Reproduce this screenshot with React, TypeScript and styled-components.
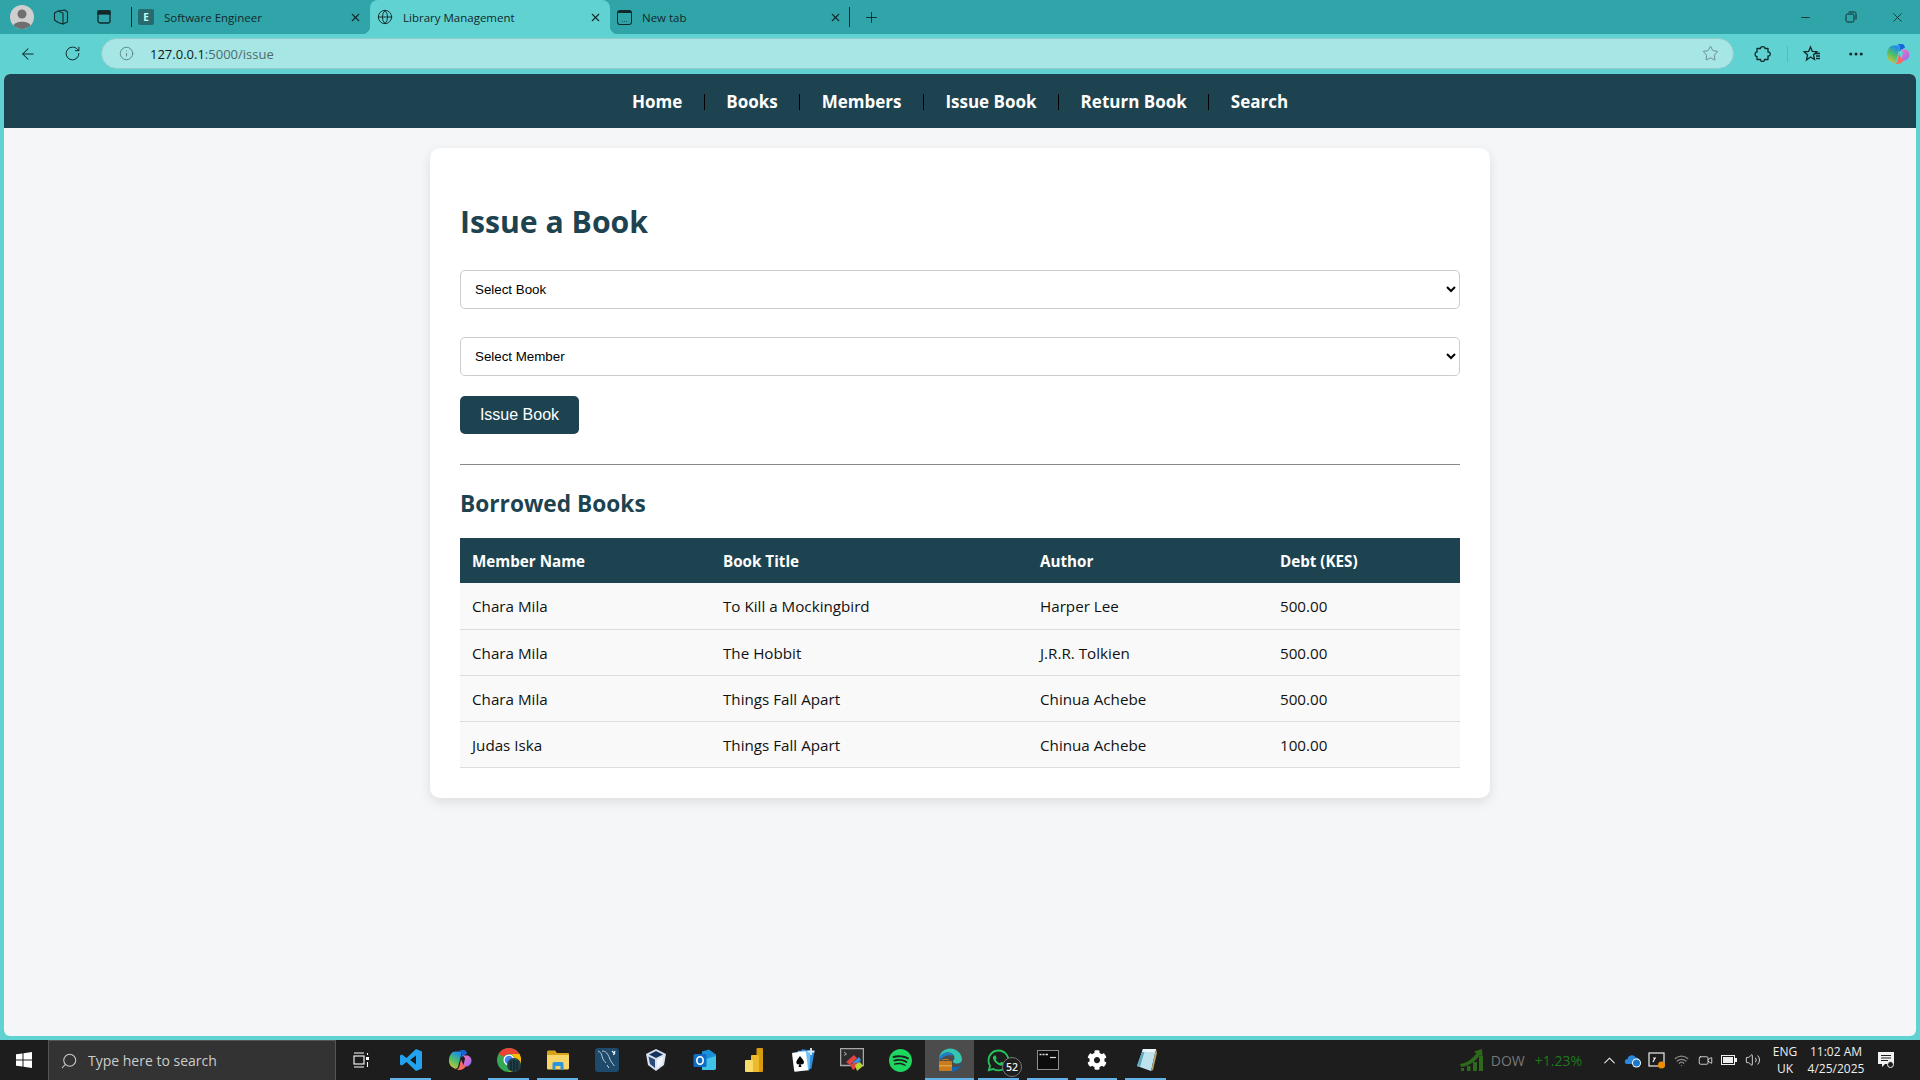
import { Fragment } from "react";
import styled, { createGlobalStyle, css } from "styled-components";
import { ArrowLeft, RotateCw, Info, Star, MoreHorizontal, Minus, X, Plus, Globe, Search as SearchIcon, ChevronUp, Wifi, Video, Volume2 } from "lucide-react";
import { SiSpotify } from "react-icons/si";
import { FaWhatsapp, FaCog } from "react-icons/fa";

const GlobalStyle = createGlobalStyle`
  html, body {
    margin: 0;
    padding: 0;
    height: 100%;
    overflow: hidden;
  }
  * {
    box-sizing: border-box;
  }
`;

const Screen = styled.div`
  display: flex;
  flex-direction: column;
  width: 1920px;
  height: 1080px;
  background: #60d2d2;
  font-family: "Open Sans", "Liberation Sans", sans-serif;
`;

const TabStrip = styled.div`
  display: flex;
  align-items: stretch;
  height: 34px;
  background: #30a5a9;
  color: #10292b;
`;

const StripSlot = styled.div<{ $w: number }>`
  display: flex;
  align-items: center;
  justify-content: center;
  width: ${(p) => p.$w}px;
`;

const activeTab = css`
  background: #60d2d2;
  border-radius: 8px 8px 0 0;
  &::before,
  &::after {
    content: "";
    position: absolute;
    bottom: 0;
    width: 8px;
    height: 8px;
  }
  &::before {
    left: -8px;
    background: radial-gradient(circle at 0 0, transparent 8px, #60d2d2 8.5px);
  }
  &::after {
    right: -8px;
    background: radial-gradient(circle at 100% 0, transparent 8px, #60d2d2 8.5px);
  }
`;

const dividerTab = css`
  &::before {
    content: "";
    position: absolute;
    left: 1px;
    top: 7px;
    bottom: 7px;
    width: 1px;
    background: #12282a;
  }
`;

const Tab = styled.div<{ $active?: boolean; $divider?: boolean; $pad: number }>`
  position: relative;
  display: flex;
  align-items: center;
  width: 240px;
  padding: 0 8px 0 ${(p) => p.$pad}px;
  font-size: 11.5px;
  color: #12282a;
  ${(p) => p.$active && activeTab}
  ${(p) => p.$divider && dividerTab}
`;

const TabTitle = styled.span`
  flex: 1;
  margin-left: 10px;
  white-space: nowrap;
`;

const Favicon = styled.div`
  display: flex;
  align-items: center;
  justify-content: center;
  width: 16px;
  height: 16px;
  border-radius: 2px;
  background: #276b70;
  color: #cfe;
  font-size: 10px;
  font-weight: 700;
`;

const NewTabIcon = styled.div`
  display: flex;
  align-items: flex-end;
  justify-content: center;
  width: 15px;
  height: 15px;
  border: 1.3px solid #12282a;
  border-top-width: 3px;
  border-radius: 3px;
  font-size: 8px;
  line-height: 7px;
`;

const PlusSlot = styled.div`
  display: flex;
  align-items: center;
  margin-left: 13px;
`;

const TabEnd = styled.div`
  width: 1px;
  height: 20px;
  margin: 7px 0 0 -1px;
  background: #12282a;
`;

const WindowControls = styled.div`
  display: flex;
  align-items: center;
  margin-left: auto;
  color: #10292b;
`;

const WindowButton = styled.div`
  display: flex;
  align-items: center;
  justify-content: center;
  width: 46px;
`;

const Toolbar = styled.div`
  display: flex;
  align-items: center;
  height: 40px;
  padding-bottom: 1px;
  color: #10292b;
`;

const ToolButton = styled.div<{ $w: number; $pl?: number }>`
  display: flex;
  flex-shrink: 0;
  align-items: center;
  justify-content: center;
  width: ${(p) => p.$w}px;
  padding-left: ${(p) => p.$pl ?? 0}px;
`;

const AddressBar = styled.div`
  display: flex;
  flex-shrink: 0;
  align-items: center;
  width: 1633px;
  height: 31px;
  margin-left: 13px;
  padding: 0 14px 0 17px;
  background: #a6e7e6;
  border: 1px solid #92cbcb;
  border-radius: 16px;
  font-size: 13px;
  color: #4f6a6b;
`;

const Host = styled.span`
  margin-left: 16px;
  color: #0b1a1b;
`;

const AddressEnd = styled.div`
  display: flex;
  margin-left: auto;
  color: #6c8283;
`;

const ToolDivider = styled.div`
  flex-shrink: 0;
  width: 1px;
  height: 16px;
  background: #7fa9a9;
`;

const Viewport = styled.div`
  flex: 1;
  margin: 0 4px 4px;
  min-height: 0;
  background: #f4f6f8;
  border-radius: 6px;
  overflow: hidden;
`;

const TopNav = styled.nav`
  display: flex;
  align-items: center;
  justify-content: center;
  height: 54px;
  background: #1e4350;
`;

const NavLink = styled.a`
  padding: 0 21.5px;
  color: #fff;
  font-size: 17px;
  font-weight: 700;
`;

const NavDivider = styled.span`
  width: 1px;
  height: 16px;
  margin-top: 2px;
  background: #000;
`;

const Card = styled.main`
  width: 1060px;
  margin: 20px auto 0;
  padding: 30px;
  background: #fff;
  border-radius: 10px;
  box-shadow: 0 4px 12px rgba(0, 0, 0, 0.1);
`;

const Title = styled.h1`
  margin: 22px 0 26px;
  font-size: 30.2px;
  font-weight: 700;
  line-height: 44px;
  color: #1e4350;
`;

const Picker = styled.select`
  display: block;
  width: 100%;
  height: 39px;
  margin-bottom: 28px;
  padding: 0 10px;
  background: #fff;
  border: 1px solid #ccc;
  border-radius: 5px;
  font-family: "Liberation Sans", Arial, sans-serif;
  font-size: 13.33px;
  color: #000;
  &:last-of-type {
    margin-bottom: 20px;
  }
`;

const IssueButton = styled.button`
  display: block;
  width: 119px;
  height: 38px;
  padding: 0;
  background: #1e4350;
  border: 0;
  border-radius: 5px;
  font-family: "Liberation Sans", Arial, sans-serif;
  font-size: 16px;
  color: #fff;
`;

const Rule = styled.hr`
  height: 1px;
  margin: 30px 0 24px;
  border: 0;
  background: #888;
`;

const SubTitle = styled.h2`
  margin: 0 0 20px;
  font-size: 22.7px;
  font-weight: 700;
  line-height: 29px;
  color: #1e4350;
`;

const BookTable = styled.table`
  width: 100%;
  border-collapse: collapse;
  table-layout: fixed;
  font-size: 15.2px;
`;

const HeadCell = styled.th<{ $w: number }>`
  width: ${(p) => p.$w}px;
  height: 45px;
  padding: 0 12px;
  background: #1e4350;
  color: #fff;
  font-weight: 700;
  text-align: left;
`;

const Cell = styled.td`
  height: 46px;
  padding: 1px 12px 0;
  background: #f9f9f9;
  border-bottom: 1px solid #ddd;
  color: #111;
`;

const Taskbar = styled.footer`
  display: flex;
  align-items: center;
  height: 40px;
  background: #1d1d1d;
  color: #fff;
`;

const StartButton = styled.div`
  display: flex;
  align-items: center;
  justify-content: center;
  width: 48px;
  height: 100%;
`;

const SearchBox = styled.div`
  display: flex;
  align-items: center;
  width: 288px;
  height: 100%;
  padding-left: 11px;
  background: #333;
  border: 1px solid #555;
  border-bottom: 0;
  color: #ccc;
  font-size: 14px;
`;

const SearchLabel = styled.span`
  margin-left: 10px;
`;

const TaskView = styled.div`
  display: flex;
  align-items: center;
  justify-content: center;
  width: 50px;
`;

const AppSlot = styled.div<{ $open?: boolean; $active?: boolean }>`
  position: relative;
  display: flex;
  align-items: center;
  justify-content: center;
  width: 49px;
  height: 40px;
  background: ${(p) => (p.$active ? "#4c4c4c" : "transparent")};
  &::after {
    content: "";
    display: ${(p) => (p.$open ? "block" : "none")};
    position: absolute;
    bottom: 0;
    left: ${(p) => (p.$active ? 0 : 4)}px;
    right: ${(p) => (p.$active ? 0 : 4)}px;
    height: 2px;
    background: #63b3ea;
  }
`;

const Badge = styled.span`
  position: absolute;
  right: 1px;
  bottom: 3px;
  width: 20px;
  height: 20px;
  border: 1px solid #777;
  border-radius: 50%;
  background: #1d1d1d;
  color: #eee;
  font-size: 10.5px;
  font-weight: 600;
  line-height: 18px;
  text-align: center;
`;

const Widget = styled.div`
  display: flex;
  align-items: center;
  margin-left: auto;
  font-size: 14px;
`;

const Dow = styled.span`
  margin-left: 7px;
  color: #777;
`;

const Change = styled.span`
  margin-left: 10px;
  color: #1c7a1c;
`;

const TrayIcons = styled.div`
  display: flex;
  align-items: center;
  margin-left: 15px;
`;

const TrayIcon = styled.div`
  display: flex;
  align-items: center;
  justify-content: center;
  width: 24px;
  color: #eee;
`;

const TrayText = styled.div<{ $w: number; $ml: number }>`
  width: ${(p) => p.$w}px;
  margin-left: ${(p) => p.$ml}px;
  font-size: 12px;
  line-height: 17px;
  text-align: center;
  color: #eee;
`;

const NotifySlot = styled.div`
  display: flex;
  justify-content: center;
  width: 54px;
  padding-right: 14px;
`;

const ICON = 24;

function Avatar() {
  return (
    <svg width="24" height="24" viewBox="0 0 24 24">
      <circle cx="12" cy="12" r="12" fill="#cfcfcf" />
      <circle cx="12" cy="9" r="4.5" fill="#6f6f6f" />
      <path d="M3.5 20.5C5 15.500 19 15.500 20.500 20.500 16 25 8 25 3.500 20.500Z" fill="#6f6f6f" />
    </svg>
  );
}

function Workspaces() {
  return (
    <svg width="16" height="16" viewBox="0 0 16 16" fill="none" stroke="#12282a" strokeWidth="1.1">
      <path d="M5 2 12 1 14.500 3V13L10 15" />
      <path d="M1.500 4 5 2 10 4V15L5 13.500 1.500 11Z" />
    </svg>
  );
}

function VerticalTabs() {
  return (
    <svg width="14" height="14" viewBox="0 0 14 14" fill="none" stroke="#12282a" strokeWidth="1.3">
      <rect x="1" y="1" width="12" height="12" rx="2" />
      <rect x="1" y="1" width="12" height="3" fill="#12282a" />
    </svg>
  );
}

function ExtensionsIcon() {
  return (
    <svg width="18" height="18" viewBox="0 0 18 18" fill="none" stroke="#10292b" strokeWidth="1.3" strokeLinejoin="round">
      <path d="M6.500 3.500C6.500 1 11 1 11 3.500H14V7C17 6.500 17 11.500 14 11V14.500H10.500C11 17 6 17 6.500 14.500H3V11.500C0.500 12 0.500 6.500 3 7V3.500Z" />
    </svg>
  );
}

function FavoritesIcon() {
  return (
    <svg width="18" height="18" viewBox="0 0 18 18" fill="none" stroke="#10292b" strokeWidth="1.3">
      <path d="M7.500 2 9.300 6.300 14 6.700 10.500 9.700 11.500 14.500 7.500 12 3.500 15 4.500 9.800 1 6.800 5.700 6.300Z" />
      <path d="M12 8.500H17M13 11H17M13 13.500H17" />
    </svg>
  );
}

function CopilotLogo({ size, id }: { size: number; id: string }) {
  return (
    <svg width={size} height={size} viewBox="0 0 24 24">
      <defs>
        <linearGradient id={`${id}A`} x1="0" y1="1" x2="0.5" y2="0">
          <stop offset="0" stopColor="#f5c12e" />
          <stop offset="0.55" stopColor="#4fbf67" />
          <stop offset="1" stopColor="#1f8fe8" />
        </linearGradient>
        <linearGradient id={`${id}B`} x1="0.3" y1="0" x2="1" y2="1">
          <stop offset="0" stopColor="#ef6fc8" />
          <stop offset="1" stopColor="#8f6cf0" />
        </linearGradient>
        <linearGradient id={`${id}C`} x1="0" y1="1" x2="1" y2="0">
          <stop offset="0" stopColor="#fb7a3e" />
          <stop offset="1" stopColor="#f0568f" />
        </linearGradient>
      </defs>
      <path d="M7 3.500H14L10 19C9.500 20.500 8 21 6.500 20.500 3 19 0.500 16 1 11.500 1.500 7 4 3.500 7 3.500Z" fill={`url(#${id}A)`} />
      <path d="M11 2H15.500C17.500 2 18.500 3 19 5.500L13 9.500 14 5C14 4 13 2.500 11 2Z" fill="#1565d8" />
      <path d="M14 7.500H19C21.500 7.500 23.500 10 23.500 12.500 23.500 16 21 18.500 18 18.500H15L17 11C17.300 9.500 15.500 8 14 7.500Z" fill={`url(#${id}B)`} />
      <path d="M13 11.500 15.500 17H18.500C16 21.500 13.500 22.500 8.500 22 10.500 21.500 11 19.500 11.500 18Z" fill={`url(#${id}C)`} />
    </svg>
  );
}

function VsCodeLogo() {
  return (
    <svg width={ICON} height={ICON} viewBox="0 0 24 24">
      <path fillRule="evenodd" d="M17 1 7.500 10 3 6.500 1 7.500V16.500L3 17.500 7.500 14 17 23 23 20.500V3.500ZM17 7.500V16.500L11 12Z" fill="#23a3ef" />
    </svg>
  );
}

function ChromeLogo() {
  return (
    <svg width={ICON} height={ICON} viewBox="0 0 24 24">
      <circle cx="12" cy="12" r="12" fill="#34a853" />
      <path d="M12 0A12 12 0 0 1 22.400 6H12A6 6 0 0 0 6.800 9L1.600 6A12 12 0 0 1 12 0Z" fill="#ea4335" />
      <path d="M22.400 6A12 12 0 0 1 12 24L17.200 15A6 6 0 0 0 17.200 9 6 6 0 0 0 12 6Z" fill="#fbbc05" />
      <circle cx="12" cy="12" r="5.500" fill="#fff" />
      <circle cx="12" cy="12" r="4.300" fill="#4285f4" />
      <circle cx="17" cy="17" r="7" fill="#22414a" />
      <path d="M14 13V22M17 12V23M20 13V22" stroke="#0e2026" strokeWidth="1.2" />
    </svg>
  );
}

function FolderLogo() {
  return (
    <svg width={ICON} height={ICON} viewBox="0 0 24 24">
      <path d="M1 4C1 3 1.800 2.500 2.500 2.500H9L11 5H22C22.600 5 23 5.500 23 6V8H1Z" fill="#d9a21c" />
      <path d="M1 7H22.500C23 7 23 7.500 23 8V20C23 21 22 21.500 21.500 21.500H2.500C1.500 21.500 1 21 1 20Z" fill="#f7d568" />
      <path d="M6.500 21.500V16C6.500 15 7 14 8 14H16C17 14 17.500 15 17.500 16V21.500H14.500V18H9.500V21.500Z" fill="#2d95db" />
    </svg>
  );
}

function MysqlLogo() {
  return (
    <svg width={ICON} height={ICON} viewBox="0 0 24 24">
      <rect width="24" height="24" rx="3" fill="#1e4a6b" />
      <path d="M3 3C5 4 6.500 5 7 8 7.500 11 9 13 11 15M7 3C11 3 13 6 14.500 10 15.500 13 17 15 19.500 18" fill="none" stroke="#c9d6df" strokeWidth="0.9" />
      <path d="M17 3 20 6M20 3 18.500 7" fill="none" stroke="#e6edf2" strokeWidth="1.300" />
      <path d="M12 17 14 20" fill="none" stroke="#c9d6df" strokeWidth="1" />
    </svg>
  );
}

function VirtualBoxLogo() {
  return (
    <svg width={ICON} height={ICON} viewBox="0 0 24 24">
      <path d="M12 1 22 6 20 17 12 23 4 17 2 6Z" fill="#d8e1ef" />
      <path d="M12 3 19 6.500 12 10 5 6.500Z" fill="#16345e" />
      <path d="M4.500 8.500 11 11.500V20L6 16Z" fill="#2c4a78" />
      <path d="M19.500 8.500 13 11.500V20L18 16Z" fill="#f2f5fa" />
    </svg>
  );
}

function OutlookLogo() {
  return (
    <svg width={ICON} height={ICON} viewBox="0 0 24 24">
      <path d="M9 3.500 16 1.500 23 6.500V20C23 21 22 22 21 22H9Z" fill="#1a90d9" />
      <path d="M9 12 23 8V20C23 21 22 22 21 22H9Z" fill="#3fc3e8" />
      <rect x="0.500" y="6" width="13" height="13" rx="1.500" fill="#0f6cc4" />
      <ellipse cx="7" cy="12.500" rx="3.200" ry="3.700" fill="none" stroke="#fff" strokeWidth="1.600" />
    </svg>
  );
}

function PowerBiLogo() {
  return (
    <svg width={ICON} height={ICON} viewBox="0 0 24 24">
      <rect x="14.500" y="0" width="6.500" height="24" rx="1" fill="#d79b0d" />
      <rect x="9" y="7" width="8" height="17" rx="1" fill="#eeba2b" />
      <rect x="3" y="12" width="8" height="12" rx="1" fill="#f9db6a" />
    </svg>
  );
}

function SolitaireLogo() {
  return (
    <svg width={ICON} height={ICON} viewBox="0 0 24 24">
      <rect x="9" y="2" width="13" height="18" rx="1" fill="#2f8de0" transform="rotate(10 15 11)" />
      <rect x="6" y="3" width="13" height="19" rx="1" fill="#6cc0f2" transform="rotate(4 12 12)" />
      <rect x="2" y="4" width="14" height="19" rx="1" fill="#fff" transform="rotate(-7 9 13)" />
      <path d="M9 8C11 11 13.500 12.500 12.800 15 12 17 10 16.500 9.500 15.500L10.500 19H7.500L8.500 15.500C8 16.500 6 17 5.500 15 5 12.500 7 11 9 8Z" fill="#000" />
      <path d="M20 0V7M16.500 3.500H23.500" stroke="#d8eeff" strokeWidth="1.800" />
    </svg>
  );
}

function SnipLogo() {
  return (
    <svg width={ICON} height={ICON} viewBox="0 0 24 24">
      <rect x="0.500" y="0.500" width="23" height="17" fill="#2b2b2b" stroke="#a8a8a8" strokeWidth="1.500" />
      <path d="M4 4 6.500 6 4 7.500" fill="none" stroke="#ccc" strokeWidth="0.800" />
      <path d="M6 14 14 7 17 10 10 17Z" fill="#e5433e" />
      <path d="M12 15 19 9 21 12 16 18Z" fill="#3b8fe0" />
      <path d="M10 17 16 14 18 18 13 22Z" fill="#e5433e" />
      <path d="M15 17 20 14 23 18 17 23Z" fill="#b9d534" />
    </svg>
  );
}

function EdgeLogo() {
  return (
    <svg width={ICON} height={ICON} viewBox="0 0 24 24">
      <path d="M1 10C2 4 7 0.500 12 0.500 19 0.500 24 6 24 11.500 24 14 22 15.500 19 15.500 17 15.500 15 15 15 13.500 15 12 16.500 12 16.500 10 16.500 7 14 4.500 10 4.500 6 4.500 2.500 7 1 10Z" fill="#34c6b0" />
      <path d="M1 10C3 6 7 4.500 10 4.500 13 4.500 15 6 15 7.500 11 6.500 3 8 1.500 14Z" fill="#1b7fce" />
      <path d="M12 23.500C17 24 21 21.500 23.500 17 22 18.500 18 20 15 19 13 18.500 12 18 12 18Z" fill="#1466b0" />
      <rect x="1" y="13" width="13" height="10" rx="1" fill="#c77a1e" />
      <rect x="1" y="17" width="13" height="1.500" fill="#e2a33c" />
      <rect x="5" y="11.500" width="5" height="2" fill="none" stroke="#c77a1e" strokeWidth="1" />
    </svg>
  );
}

function TerminalLogo() {
  return (
    <svg width={ICON} height={ICON} viewBox="0 0 24 24">
      <rect x="1.500" y="2.500" width="21" height="19" fill="#0c0c0c" stroke="#8e8e8e" strokeWidth="1" />
      <path d="M3.500 6.500H5.500M6.500 6.500H8.500M9.500 6.500H12" stroke="#ddd" strokeWidth="1.500" />
      <path d="M14 9.500H20" stroke="#ddd" strokeWidth="1.200" />
    </svg>
  );
}

function NotepadLogo() {
  return (
    <svg width={ICON} height={ICON} viewBox="0 0 24 24">
      <path d="M9 1H22L17 23 3 18Z" fill="#bfe3ee" />
      <path d="M9 1 3 18 6 19 11 2Z" fill="#5fa7bf" />
      <path d="M22 1 17 23 19 22 23 5Z" fill="#b5a368" />
      <path d="M9 1H22L21 4H8Z" fill="#e8f6fa" />
    </svg>
  );
}

function WindowsLogo() {
  return (
    <svg width="16" height="16" viewBox="0 0 16 16" fill="#fff">
      <path d="M0 2.300 6.500 1.400V7.600H0ZM7.500 1.200 16 0V7.600H7.500ZM0 8.500H6.500V14.600L0 13.700ZM7.500 8.500H16V16L7.500 14.800Z" />
    </svg>
  );
}

function TaskViewIcon() {
  return (
    <svg width="16" height="16" viewBox="0 0 16 16" fill="none" stroke="#fff" strokeWidth="1.100">
      <path d="M1 1H11M1 15H11" />
      <rect x="1" y="4" width="10" height="8" />
      <rect x="13" y="5" width="3" height="3" fill="#fff" stroke="none" />
      <path d="M14.500 1V3M14.500 10V15" />
    </svg>
  );
}

function TrendLogo() {
  return (
    <svg width="24" height="24" viewBox="0 0 24 24" fill="#2d6a1c">
      <rect x="1" y="20" width="3" height="3" />
      <rect x="7" y="18" width="3.500" height="5" />
      <rect x="13" y="14" width="4" height="9" />
      <rect x="19" y="8" width="4" height="15" />
      <path d="M0 16C7 15 12 11 16.500 5.500L14 3.500 22 1 22.500 9 20 7C15 14 9 18 1 19Z" />
    </svg>
  );
}

function OneDriveIcon() {
  return (
    <svg width="18" height="16" viewBox="0 0 18 16">
      <path d="M3 12C0 12 0 7 3.500 7 4 3 10 2 11.500 5.500 15 5 16 9 14 10V12Z" fill="#2c87d8" />
      <circle cx="12.500" cy="11" r="4.500" fill="#fff" />
      <circle cx="12.500" cy="11" r="3.500" fill="#1a78d0" />
    </svg>
  );
}

function MeetIcon() {
  return (
    <svg width="18" height="18" viewBox="0 0 18 18" fill="none" stroke="#eee" strokeWidth="1.200">
      <rect x="1" y="2" width="15" height="13" />
      <path d="M5 11 7 7M5 7H8" />
      <circle cx="13.500" cy="14" r="3.500" fill="#f08c00" stroke="none" />
    </svg>
  );
}

function BatteryIcon() {
  return (
    <svg width="16" height="10" viewBox="0 0 16 10">
      <rect x="0.500" y="0.500" width="13" height="9" fill="none" stroke="#eee" />
      <rect x="2" y="2" width="10" height="6" fill="#eee" />
      <rect x="14" y="3" width="2" height="4" fill="#eee" />
    </svg>
  );
}

function NotifyIcon() {
  return (
    <svg width="18" height="18" viewBox="0 0 18 18">
      <path d="M1 1H17V13H8L5 16V13H1Z" fill="#f2f2f2" />
      <path d="M4 4.500H14M4 7H14M4 9.500H11" stroke="#1d1d1d" strokeWidth="1" />
      <circle cx="13.500" cy="13.500" r="3" fill="#1d1d1d" stroke="#f2f2f2" />
    </svg>
  );
}

const navItems = ["Home", "Books", "Members", "Issue Book", "Return Book", "Search"];

const columns = [
  { label: "Member Name", width: 251 },
  { label: "Book Title", width: 317 },
  { label: "Author", width: 240 },
  { label: "Debt (KES)", width: 192 },
];

const borrowed = [
  ["Chara Mila", "To Kill a Mockingbird", "Harper Lee", "500.00"],
  ["Chara Mila", "The Hobbit", "J.R.R. Tolkien", "500.00"],
  ["Chara Mila", "Things Fall Apart", "Chinua Achebe", "500.00"],
  ["Judas Iska", "Things Fall Apart", "Chinua Achebe", "100.00"],
];

export default function App() {
  return (
    <Screen>
      <GlobalStyle />
      <TabStrip>
        <StripSlot $w={44}>
          <Avatar />
        </StripSlot>
        <StripSlot $w={34}>
          <Workspaces />
        </StripSlot>
        <StripSlot $w={52}>
          <VerticalTabs />
        </StripSlot>
        <Tab $divider $pad={8}>
          <Favicon>E</Favicon>
          <TabTitle>Software Engineer</TabTitle>
          <X size={13} />
        </Tab>
        <Tab $active $pad={7}>
          <Globe size={16} strokeWidth={1.4} />
          <TabTitle>Library Management</TabTitle>
          <X size={13} />
        </Tab>
        <Tab $pad={7}>
          <NewTabIcon>···</NewTabIcon>
          <TabTitle>New tab</TabTitle>
          <X size={13} />
        </Tab>
        <TabEnd />
        <PlusSlot>
          <Plus size={17} strokeWidth={1.3} />
        </PlusSlot>
        <WindowControls>
          <WindowButton>
            <Minus size={13} strokeWidth={1.6} />
          </WindowButton>
          <WindowButton>
            <svg width="12" height="12" viewBox="0 0 12 12" fill="none" stroke="#10292b" strokeWidth="1">
              <rect x="1" y="3" width="8" height="8" rx="1.500" />
              <path d="M3.500 1H9.500C10.500 1 11 1.500 11 2.500V8.500" />
            </svg>
          </WindowButton>
          <WindowButton>
            <X size={15} strokeWidth={1.3} />
          </WindowButton>
        </WindowControls>
      </TabStrip>
      <Toolbar>
        <ToolButton $w={56}>
          <ArrowLeft size={18} strokeWidth={1.4} />
        </ToolButton>
        <ToolButton $w={32}>
          <RotateCw size={17} strokeWidth={1.4} />
        </ToolButton>
        <AddressBar>
          <Info size={15} strokeWidth={1.2} />
          <Host>127.0.0.1</Host>:5000/issue
          <AddressEnd>
            <Star size={17} strokeWidth={1.3} />
          </AddressEnd>
        </AddressBar>
        <ToolButton $w={53} $pl={5}>
          <ExtensionsIcon />
        </ToolButton>
        <ToolDivider />
        <ToolButton $w={48}>
          <FavoritesIcon />
        </ToolButton>
        <ToolButton $w={40}>
          <MoreHorizontal size={18} />
        </ToolButton>
        <ToolButton $w={44}>
          <CopilotLogo size={24} id="copBar" />
        </ToolButton>
      </Toolbar>
      <Viewport>
        <TopNav>
          {navItems.map((item, i) => (
            <Fragment key={item}>
              {i > 0 && <NavDivider />}
              <NavLink>{item}</NavLink>
            </Fragment>
          ))}
        </TopNav>
        <Card>
          <Title>Issue a Book</Title>
          <Picker defaultValue="">
            <option value="">Select Book</option>
          </Picker>
          <Picker defaultValue="">
            <option value="">Select Member</option>
          </Picker>
          <IssueButton>Issue Book</IssueButton>
          <Rule />
          <SubTitle>Borrowed Books</SubTitle>
          <BookTable>
            <thead>
              <tr>
                {columns.map((c) => (
                  <HeadCell key={c.label} $w={c.width}>
                    {c.label}
                  </HeadCell>
                ))}
              </tr>
            </thead>
            <tbody>
              {borrowed.map((row, i) => (
                <tr key={i}>
                  {row.map((value, j) => (
                    <Cell key={j}>{value}</Cell>
                  ))}
                </tr>
              ))}
            </tbody>
          </BookTable>
        </Card>
      </Viewport>
      <Taskbar>
        <StartButton>
          <WindowsLogo />
        </StartButton>
        <SearchBox>
          <SearchIcon size={18} strokeWidth={1.4} style={{ transform: "scaleX(-1)" }} />
          <SearchLabel>Type here to search</SearchLabel>
        </SearchBox>
        <TaskView>
          <TaskViewIcon />
        </TaskView>
        <AppSlot $open>
          <VsCodeLogo />
        </AppSlot>
        <AppSlot>
          <CopilotLogo size={24} id="copTask" />
        </AppSlot>
        <AppSlot $open>
          <ChromeLogo />
        </AppSlot>
        <AppSlot $open>
          <FolderLogo />
        </AppSlot>
        <AppSlot>
          <MysqlLogo />
        </AppSlot>
        <AppSlot>
          <VirtualBoxLogo />
        </AppSlot>
        <AppSlot>
          <OutlookLogo />
        </AppSlot>
        <AppSlot>
          <PowerBiLogo />
        </AppSlot>
        <AppSlot>
          <SolitaireLogo />
        </AppSlot>
        <AppSlot>
          <SnipLogo />
        </AppSlot>
        <AppSlot>
          <SiSpotify size={23} color="#1ed760" />
        </AppSlot>
        <AppSlot $open $active>
          <EdgeLogo />
        </AppSlot>
        <AppSlot $open>
          <FaWhatsapp size={25} color="#25c45a" />
          <Badge>52</Badge>
        </AppSlot>
        <AppSlot $open>
          <TerminalLogo />
        </AppSlot>
        <AppSlot $open>
          <FaCog size={20} color="#fff" />
        </AppSlot>
        <AppSlot $open>
          <NotepadLogo />
        </AppSlot>
        <Widget>
          <TrendLogo />
          <Dow>DOW</Dow>
          <Change>+1.23%</Change>
        </Widget>
        <TrayIcons>
          <TrayIcon>
            <ChevronUp size={19} strokeWidth={1.3} />
          </TrayIcon>
          <TrayIcon>
            <OneDriveIcon />
          </TrayIcon>
          <TrayIcon>
            <MeetIcon />
          </TrayIcon>
          <TrayIcon>
            <Wifi size={15} color="#888" />
          </TrayIcon>
          <TrayIcon>
            <Video size={15} strokeWidth={1.3} />
          </TrayIcon>
          <TrayIcon>
            <BatteryIcon />
          </TrayIcon>
          <TrayIcon>
            <Volume2 size={16} strokeWidth={1.3} />
          </TrayIcon>
        </TrayIcons>
        <TrayText $w={30} $ml={5}>
          ENG
          <br />
          UK
        </TrayText>
        <TrayText $w={60} $ml={6}>
          11:02 AM
          <br />
          4/25/2025
        </TrayText>
        <NotifySlot>
          <NotifyIcon />
        </NotifySlot>
      </Taskbar>
    </Screen>
  );
}
